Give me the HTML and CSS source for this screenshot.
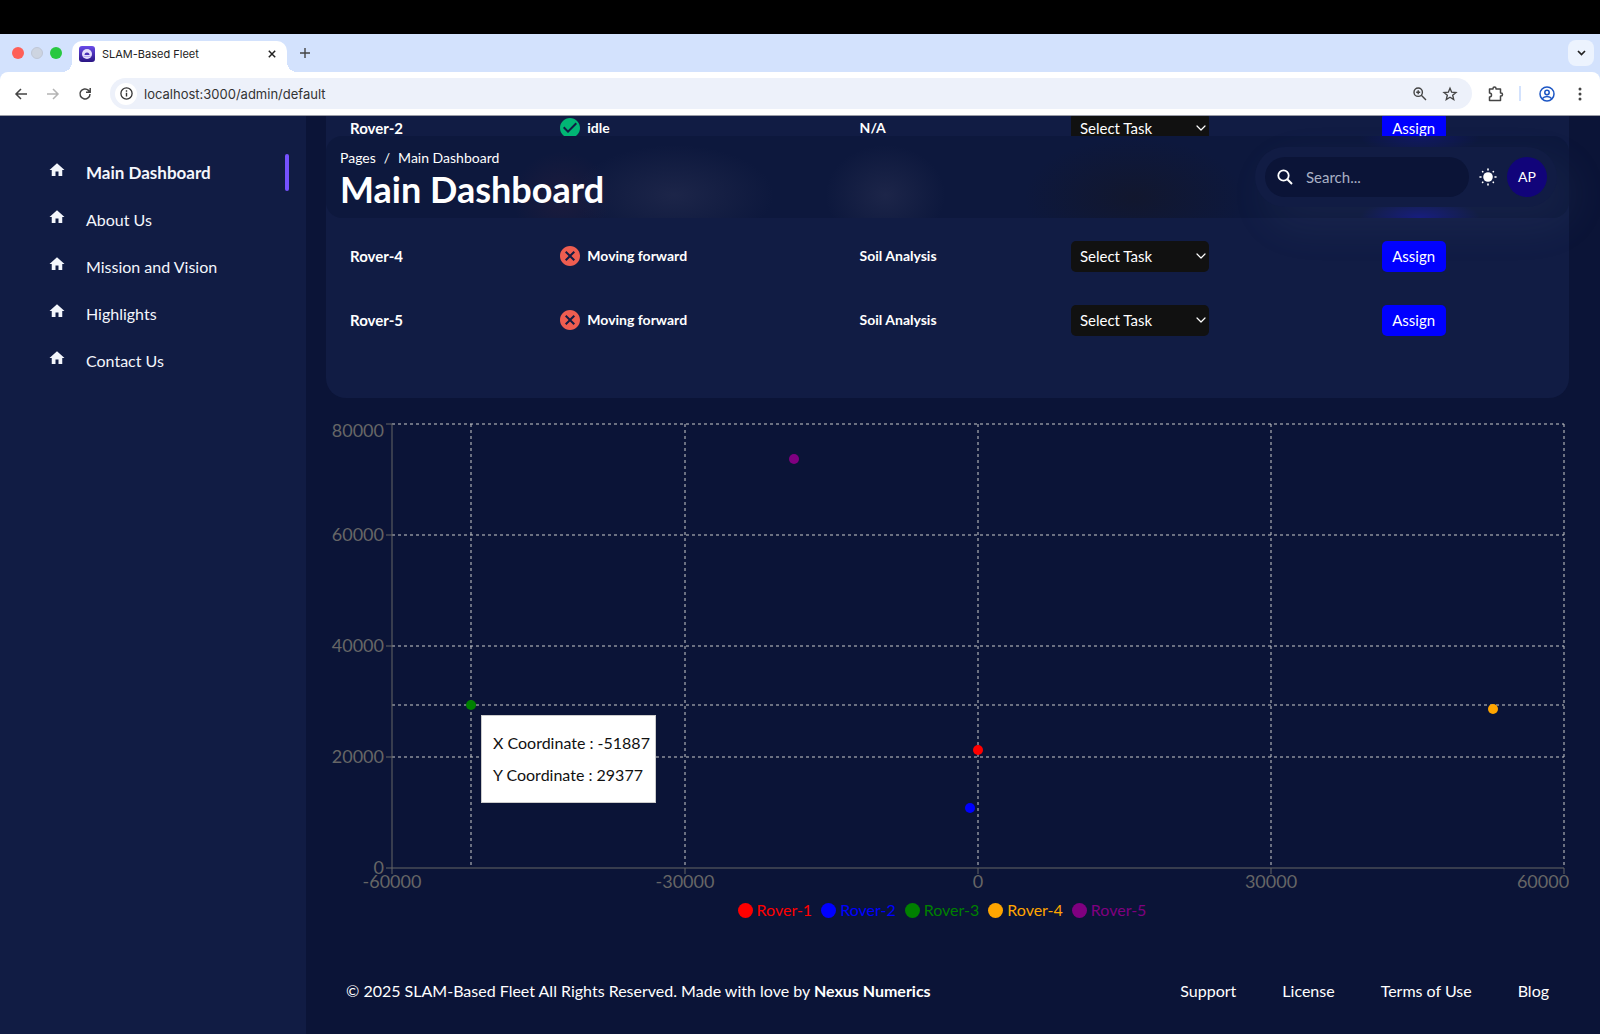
FILE: index.html
```html
<!DOCTYPE html>
<html lang="en">
<head>
<meta charset="utf-8">
<title>SLAM-Based Fleet</title>
<link rel="stylesheet" href="styles.css">
</head>
<body>
<svg class="defs" aria-hidden="true">
  <symbol id="home" viewBox="0 0 24 24"><path fill="currentColor" d="M10 20v-6h4v6h5v-8h3L12 3 2 12h3v8z"/></symbol>
  <symbol id="cross" viewBox="0 0 24 24"><path fill="currentColor" d="M12 2C6.47 2 2 6.47 2 12s4.47 10 10 10 10-4.47 10-10S17.53 2 12 2zm5 13.59L15.59 17 12 13.41 8.41 17 7 15.59 10.59 12 7 8.41 8.41 7 12 10.59 15.59 7 17 8.41 13.41 12 17 15.59z"/></symbol>
  <symbol id="check" viewBox="0 0 24 24"><path fill="currentColor" d="M12 2C6.48 2 2 6.48 2 12s4.48 10 10 10 10-4.48 10-10S17.52 2 12 2zm-2 15l-5-5 1.41-1.41L10 14.17l7.59-7.59L19 8l-9 9z"/></symbol>
  <symbol id="chevron" viewBox="0 0 10 6"><path fill="none" stroke="currentColor" stroke-width="1.2" stroke-linecap="round" stroke-linejoin="round" d="M1 1l4 4 4-4"/></symbol>
</svg>

<header class="chrome">
  <div class="tabs">
    <div class="lights"><i class="light red"></i><i class="light grey"></i><i class="light green"></i></div>
    <div class="tab">
      <svg class="favicon" viewBox="0 0 16 16"><defs><linearGradient id="fav" x1="0" y1="0" x2="0" y2="1"><stop offset="0" stop-color="#6a4be8"/><stop offset="1" stop-color="#2a1583"/></linearGradient></defs><rect width="16" height="16" rx="3" fill="url(#fav)"/><circle cx="8" cy="8" r="5" fill="#e4defb"/><path d="M5.5 9a2.5 2.5 0 0 1 5 0z" fill="#4a30b8"/><path d="M4.5 10.500h7" stroke="#b9aaf2"/></svg>
      <span class="tab-title">SLAM-Based Fleet</span>
      <button class="plain" aria-label="Close tab"><svg width="8" height="8" viewBox="0 0 8 8"><path d="M.8.8l6.400 6.400M7.200.8L.8 7.200" stroke="#222" stroke-width="1.500"/></svg></button>
    </div>
    <button class="plain new-tab" aria-label="New tab"><svg width="10" height="10" viewBox="0 0 10 10"><path d="M5 0v10M0 5h10" stroke="#444" stroke-width="1.400"/></svg></button>
    <button class="plain tab-menu" aria-label="Search tabs"><svg width="9" height="6" viewBox="0 0 9 6"><path d="M1 1l3.500 3.500L8 1" fill="none" stroke="#222" stroke-width="1.700"/></svg></button>
  </div>
  <div class="toolbar">
    <button class="plain" aria-label="Back"><svg width="14" height="12" viewBox="0 0 14 12"><path d="M13 6H2M7 1L2 6l5 5" fill="none" stroke="#444" stroke-width="1.500"/></svg></button>
    <button class="plain" aria-label="Forward"><svg width="14" height="12" viewBox="0 0 14 12"><path d="M1 6h11M7 1l5 5-5 5" fill="none" stroke="#b4b4b4" stroke-width="1.500"/></svg></button>
    <button class="plain" aria-label="Reload"><svg width="14" height="14" viewBox="0 0 14 14"><path d="M12 7a5 5 0 1 1-1.500-3.600L12 5M12.200 1v4.200H8" fill="none" stroke="#444" stroke-width="1.500"/></svg></button>
    <div class="address">
      <span class="info"><svg width="13" height="13" viewBox="0 0 13 13"><circle cx="6.500" cy="6.500" r="5.600" fill="none" stroke="#333" stroke-width="1.300"/><path d="M6.500 5.700v3.800M6.500 3.300v1.400" stroke="#333" stroke-width="1.400"/></svg></span>
      <input class="url" type="text" aria-label="Address" value="localhost:3000/admin/default">
      <button class="plain" aria-label="Zoom"><svg width="14" height="14" viewBox="0 0 14 14"><circle cx="5.200" cy="5.200" r="4.200" fill="none" stroke="#444" stroke-width="1.400"/><path d="M8.300 8.300L13 13M5.200 3.200v4M3.200 5.200h4" stroke="#444" stroke-width="1.400"/></svg></button>
      <button class="plain" aria-label="Bookmark"><svg width="16" height="16" viewBox="0 0 24 24"><path d="M12 3.200l2.500 6 6.500.5-5 4.200 1.600 6.300-5.600-3.400-5.600 3.400L8 13.900 3 9.700l6.500-.5z" fill="none" stroke="#444" stroke-width="2"/></svg></button>
    </div>
    <button class="plain ext" aria-label="Extensions"><svg width="16" height="16" viewBox="0 0 16 16"><path d="M1.500 3H5V2.500a1.500 1.500 0 0 1 3 0V3h4.500v4h.5a1.500 1.500 0 0 1 0 3h-.5v4.500h-11V11a2 2 0 0 0 0-4z" fill="none" stroke="#444" stroke-width="1.500" stroke-linejoin="round"/></svg></button>
    <span class="divider"></span>
    <button class="plain profile" aria-label="Profile"><svg width="16" height="16" viewBox="0 0 16 16"><g fill="none" stroke="#1c56c4" stroke-width="1.500"><circle cx="8" cy="8" r="7"/><circle cx="8" cy="6.500" r="2.200"/><path d="M3.200 12.800c1.200-1.600 2.900-2.200 4.800-2.200s3.600.6 4.800 2.200"/></g></svg></button>
    <button class="plain dots" aria-label="Menu"><svg width="4" height="14" viewBox="0 0 4 14"><g fill="#444"><circle cx="2" cy="2" r="1.500"/><circle cx="2" cy="7" r="1.500"/><circle cx="2" cy="12" r="1.500"/></g></svg></button>
  </div>
</header>

<div class="page">
  <nav class="sidebar">
    <a class="nav-item active" href="#"><svg class="nav-icon"><use href="#home"/></svg>Main Dashboard</a>
    <a class="nav-item" href="#"><svg class="nav-icon"><use href="#home"/></svg>About Us</a>
    <a class="nav-item" href="#"><svg class="nav-icon"><use href="#home"/></svg>Mission and Vision</a>
    <a class="nav-item" href="#"><svg class="nav-icon"><use href="#home"/></svg>Highlights</a>
    <a class="nav-item" href="#"><svg class="nav-icon"><use href="#home"/></svg>Contact Us</a>
  </nav>

  <main class="main">
    <div class="navbar">
      <div class="titles">
        <div class="crumbs"><a href="#">Pages</a><span>/</span><a href="#">Main Dashboard</a></div>
        <h1>Main Dashboard</h1>
      </div>
      <div class="tools">
        <label class="search"><svg width="16" height="16" viewBox="0 0 16 16"><circle cx="6.500" cy="6.500" r="5.200" fill="none" stroke="#fff" stroke-width="1.800"/><path d="M10.300 10.300L15 15" stroke="#fff" stroke-width="2"/></svg><input type="search" placeholder="Search..." aria-label="Search"></label>
        <button class="plain" aria-label="Toggle theme"><svg width="18" height="18" viewBox="0 0 18 18"><circle cx="9" cy="9" r="4.800" fill="#fff"/><path d="M9 1v1M9 16v1M1 9h1M16 9h1M3.600 3.600l.2.2M14.200 14.200l.2.2M3.600 14.400l.2-.2M14.200 3.800l.2-.2" stroke="#fff" stroke-width="1.600" stroke-linecap="round"/></svg></button>
        <button class="avatar">AP</button>
      </div>
    </div>

    <section class="card">
      <table class="rovers">
        <colgroup><col class="c-name"><col class="c-status"><col class="c-task"><col class="c-select"><col class="c-action"></colgroup>
        <tbody>
          <tr><th scope="row">Rover-2</th><td><span class="status ok"><svg><use href="#check"/></svg>idle</span></td><td>N/A</td><td><span class="pick"><select aria-label="Task for Rover-2"><option>Select Task</option></select><svg><use href="#chevron"/></svg></span></td><td><button class="assign">Assign</button></td></tr>
          <tr><td colspan="5"></td></tr>
          <tr><th scope="row">Rover-4</th><td><span class="status"><svg><use href="#cross"/></svg>Moving forward</span></td><td>Soil Analysis</td><td><span class="pick"><select aria-label="Task for Rover-4"><option>Select Task</option></select><svg><use href="#chevron"/></svg></span></td><td><button class="assign">Assign</button></td></tr>
          <tr><th scope="row">Rover-5</th><td><span class="status"><svg><use href="#cross"/></svg>Moving forward</span></td><td>Soil Analysis</td><td><span class="pick"><select aria-label="Task for Rover-5"><option>Select Task</option></select><svg><use href="#chevron"/></svg></span></td><td><button class="assign">Assign</button></td></tr>
        </tbody>
      </table>
    </section>

    <section class="chart">
      <svg class="plot" viewBox="0 0 1243 480" role="img" aria-label="Rover positions">
        <g class="grid">
          <path d="M66 6H1238M66 117H1238M66 228H1238M66 339H1238M66 287H1238"/>
          <path d="M145 6V450M359 6V450M652 6V450M945 6V450M1238 6V450"/>
        </g>
        <g class="axis">
          <path d="M66 6V450M60 6h6M60 117h6M60 228h6M60 339h6M60 450h6"/>
          <path d="M66 450H1238M66 450v6M359 450v6M652 450v6M945 450v6M1238 450v6"/>
        </g>
        <g class="tick end">
          <text x="58" y="19">80000</text><text x="58" y="123">60000</text><text x="58" y="234">40000</text><text x="58" y="345">20000</text><text x="58" y="456">0</text>
        </g>
        <g class="tick">
          <text x="66" y="470">-60000</text><text x="359" y="470">-30000</text><text x="652" y="470">0</text><text x="945" y="470">30000</text><text x="1217" y="470">60000</text>
        </g>
        <circle cx="652" cy="332" r="5" fill="red"/>
        <circle cx="644" cy="390" r="5" fill="blue"/>
        <circle cx="145" cy="287" r="5" fill="green"/>
        <circle cx="1167" cy="291" r="5" fill="orange"/>
        <circle cx="468" cy="41" r="5" fill="purple"/>
      </svg>
      <div class="tooltip"><p>X Coordinate : -51887</p><p>Y Coordinate : 29377</p></div>
      <ul class="legend"><li class="r1">Rover-1</li><li class="r2">Rover-2</li><li class="r3">Rover-3</li><li class="r4">Rover-4</li><li class="r5">Rover-5</li></ul>
    </section>

    <footer class="footer">
      <p>© 2025 SLAM-Based Fleet All Rights Reserved. Made with love by <b>Nexus Numerics</b></p>
      <div class="links"><a href="#">Support</a><a href="#">License</a><a href="#">Terms of Use</a><a href="#">Blog</a></div>
    </footer>
  </main>
</div>
</body>
</html>
```
FILE: styles.css
```css
* { box-sizing: border-box; }
body {
  margin: 0;
  min-height: 100vh;
  display: flex;
  flex-direction: column;
  background: #0b1437;
  color: #fff;
  font-family: Lato, "Liberation Sans", sans-serif;
  font-size: 16px;
  line-height: 24px;
}
p, h1, ul { margin: 0; padding: 0; }
a { color: inherit; text-decoration: none; }
button, input, select { font: inherit; color: inherit; }
.defs { display: none; }
.plain { display: inline-flex; align-items: center; justify-content: center; padding: 0; border: 0; background: none; }

/* Browser frame */
.chrome { border-top: 34px solid #000; border-bottom: 1px solid #9a9ca6; background: #d3e2fd; font-family: Inter, "Liberation Sans", sans-serif; }
.tabs { display: flex; align-items: center; height: 38px; padding: 0 6px 0 12px; }
.lights { display: flex; gap: 7px; width: 60px; }
.light { width: 12px; height: 12px; border-radius: 50%; }
.red { background: #fe5f57; }
.grey { background: #cdd4e0; border: 1px solid #bfc7d6; }
.green { background: #28c840; }
.tab { position: relative; display: flex; align-items: center; width: 215px; height: 31px; align-self: flex-end; padding: 0 11px 6px 7px; border-radius: 10px 10px 0 0; background: #fff; }
.tab::before, .tab::after { content: ""; position: absolute; bottom: 0; width: 10px; height: 10px; }
.tab::before { right: 100%; background: radial-gradient(circle at 0 0, transparent 10px, #fff 10px); }
.tab::after { left: 100%; background: radial-gradient(circle at 100% 0, transparent 10px, #fff 10px); }
.favicon { width: 16px; height: 16px; margin-right: 7px; }
.tab-title { flex: 1; font-size: 11px; color: #222; }
.new-tab { margin-left: 13px; }
.tab-menu { width: 26px; height: 26px; margin-left: auto; border-radius: 8px; background: #ecf3fe; }
.toolbar { display: flex; align-items: center; height: 43px; padding: 0 18px 0 14px; border-radius: 8px 8px 0 0; background: #fff; gap: 18px; }
.address { display: flex; flex: 1; align-items: center; gap: 15px; height: 31px; padding: 0 14px 0 5px; border-radius: 16px; background: #edf1fa; }
.info { display: flex; align-items: center; justify-content: center; width: 22px; height: 22px; border-radius: 50%; background: #fff; }
.url { flex: 1; min-width: 0; margin-left: -8px; padding: 0; border: 0; outline: 0; background: none; font-size: 13px; color: #333; }
.ext { margin-left: -2px; }
.divider { width: 2px; height: 15px; margin-left: -3px; background: #d3e2fd; }
.dots { margin-left: 5px; }

/* App shell */
.page { display: flex; flex: 1; overflow: hidden; }
.sidebar { flex: none; width: 306px; padding: 33px 17px 0 48px; background: #111c44; }
.nav-item { display: flex; align-items: center; gap: 20px; height: 47px; font-size: 16px; color: #f4f6fc; }
.nav-icon { width: 18px; height: 18px; margin-bottom: 6px; }
.nav-item.active { font-size: 17px; font-weight: 700; }
.nav-item.active::after { content: ""; width: 4px; height: 37px; margin-left: auto; border-radius: 4px; background: #7551ff; }
.main { position: relative; flex: 1; min-width: 0; padding: 0 31px 30px 20px; }

/* Frosted bar: the glows are the colours of the table row that lies under it */
.navbar {
  position: absolute; z-index: 2; top: 20px; left: 20px; right: 31px;
  display: flex; align-items: center; justify-content: space-between;
  height: 82px; padding: 0 12px 0 14px; border-radius: 16px;
  background:
    radial-gradient(ellipse 100px 50px at 28% 72%, rgba(90, 90, 120, .2), transparent),
    radial-gradient(ellipse 50px 46px at 19% 75%, rgba(120, 50, 60, .14), transparent),
    radial-gradient(ellipse 60px 50px at 45% 72%, rgba(90, 90, 120, .2), transparent),
    radial-gradient(ellipse 110px 60px at 65% 75%, rgba(22, 22, 32, .5), transparent),
    radial-gradient(ellipse 60px 20px at 88% 100%, rgba(24, 24, 190, .5), transparent),
    radial-gradient(ellipse 60px 20px at 88% 0, rgba(24, 24, 190, .3), transparent),
    #0d183d;
}
.titles { padding-top: 3px; }
.crumbs { display: flex; gap: 8px; font-size: 14px; line-height: 20px; }
h1 { font-size: 36px; line-height: 42px; font-weight: 700; }
.tools { display: flex; align-items: center; gap: 10px; padding: 10px; border-radius: 30px; background: #111c44; box-shadow: 14px 17px 40px 4px rgba(112, 144, 176, .08); }
.search { display: flex; align-items: center; gap: 13px; width: 204px; height: 40px; padding: 0 12px; border-radius: 20px; background: #0b1437; }
.search input { flex: 1; min-width: 0; padding: 0; border: 0; outline: 0; background: none; font-size: 15px; }
.search input::placeholder { color: #a9b0c4; opacity: 1; }
.avatar { width: 40px; height: 40px; padding: 0; border: 0; border-radius: 50%; background: #11047a; font-size: 14px; }

/* Rover table */
.card { margin-top: -20px; padding-bottom: 46px; border-radius: 20px; background: #111c44; }
.rovers { width: 100%; table-layout: fixed; border-collapse: collapse; font-size: 14px; font-weight: 700; text-align: left; }
.rovers th, .rovers td { height: 64px; padding: 0 0 0 24px; }
.rovers th { font-size: 15px; }
.c-name { width: 17%; }
.c-status { width: 24%; }
.c-task { width: 17%; }
.c-select { width: 25%; }
.c-action { width: 17%; }
.status { display: flex; align-items: center; gap: 5px; }
.status svg { width: 24px; height: 24px; margin-left: -3px; color: #ee5d50; }
.status.ok svg { color: #01b574; }
.pick { position: relative; display: block; width: 138px; }
.pick select { display: block; width: 100%; height: 31px; padding: 0 9px; border: 0; border-radius: 5px; appearance: none; background: #111; font-size: 15px; font-weight: 400; }
.pick svg { position: absolute; right: 3px; top: 12px; width: 10px; height: 6px; }
.assign { display: block; width: 64px; height: 31px; padding: 0; border: 0; border-radius: 5px; background: #00f; font-size: 15px; font-weight: 400; }

/* Position chart */
.chart { position: relative; margin-top: 20px; }
.plot { display: block; width: 100%; height: auto; }
.grid { fill: none; stroke: #ccc; stroke-dasharray: 3 3; }
.axis { fill: none; stroke: #666; }
.tick { fill: #666; font-size: 18px; text-anchor: middle; }
.end { text-anchor: end; }
.tooltip { position: absolute; left: 155px; top: 297px; width: 175px; padding: 11px; border: 1px solid #ccc; background: #fff; color: #111; font-size: 16px; white-space: nowrap; }
.tooltip p { line-height: 32px; }
.legend { display: flex; justify-content: center; gap: 9px; padding-right: 11px; list-style: none; }
.legend li { display: flex; align-items: center; gap: 4px; }
.legend li::before { content: ""; width: 15px; height: 15px; border-radius: 50%; background: currentColor; }
.r1 { color: red; }
.r2 { color: blue; }
.r3 { color: green; }
.r4 { color: orange; }
.r5 { color: purple; }

.footer { display: flex; justify-content: space-between; padding: 57px 20px 0; }
.links { display: flex; gap: 46px; }
```
